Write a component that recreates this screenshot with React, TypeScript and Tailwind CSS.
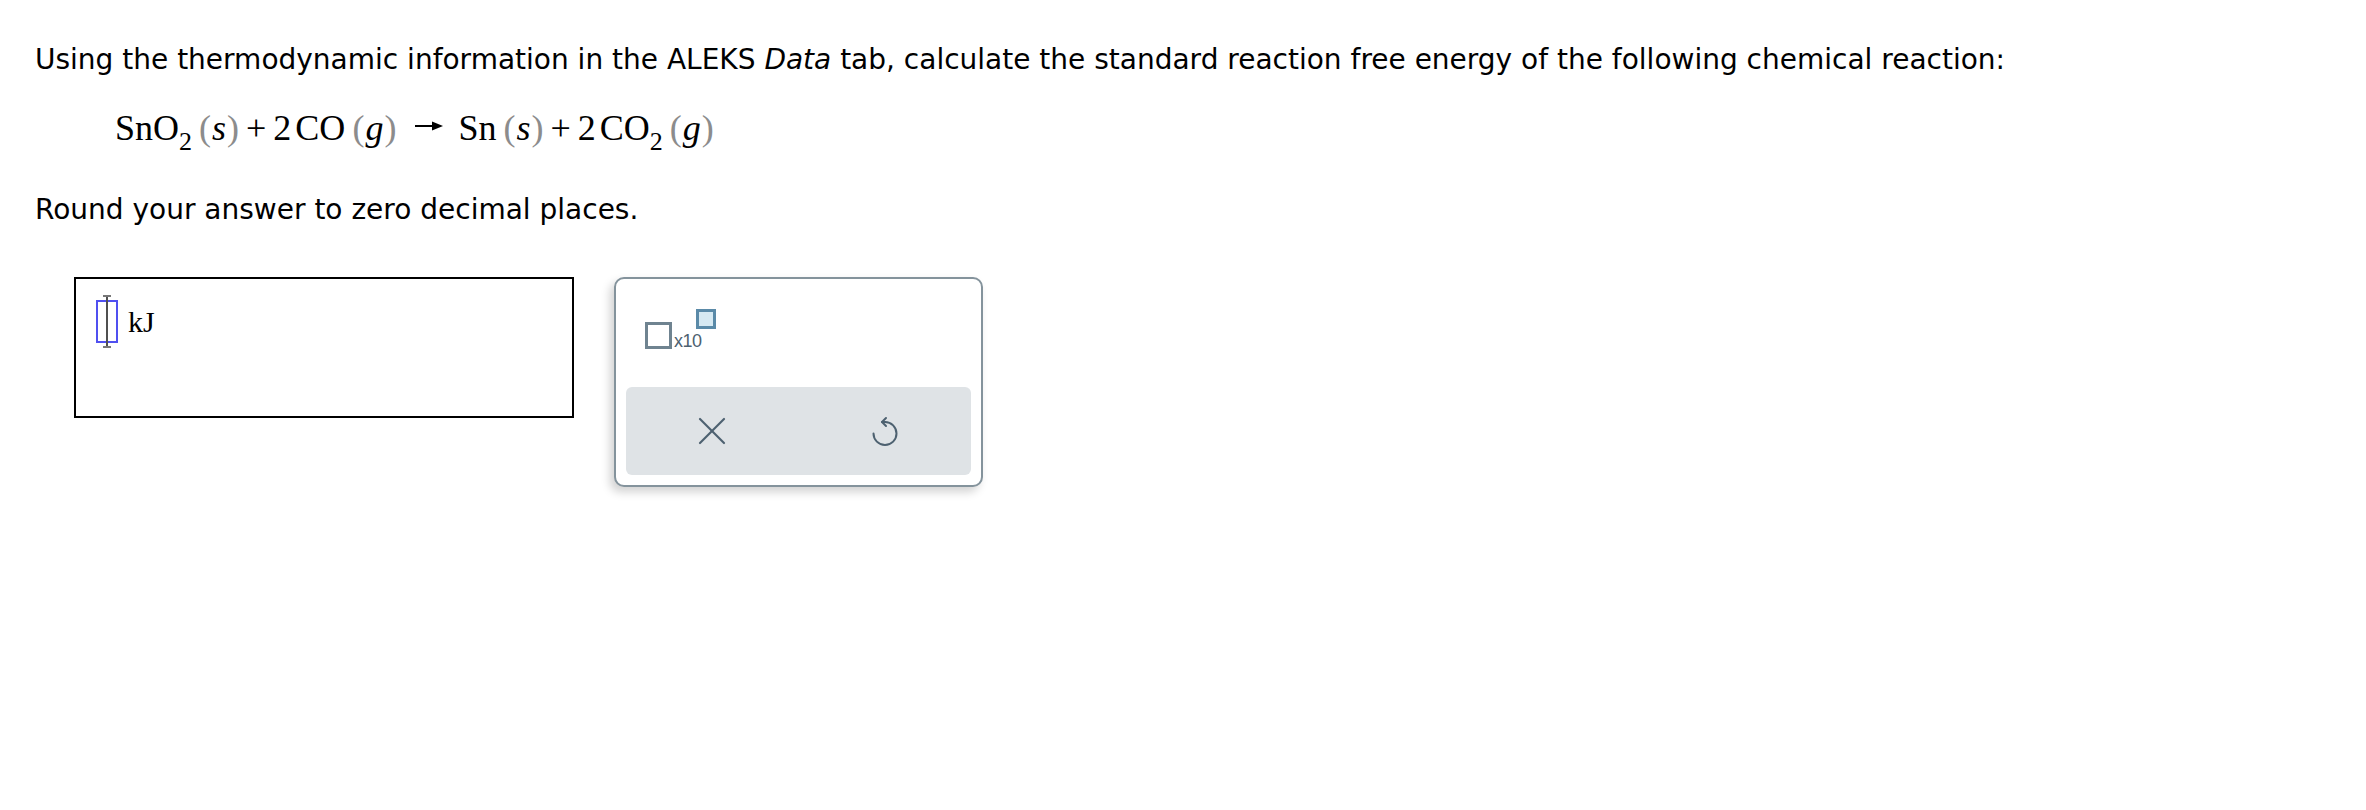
import React from "react";

function Paren({ children }: { children: React.ReactNode }) {
  return <span className="text-[#8c8c8c]">{children}</span>;
}

function Phase({ s }: { s: string }) {
  return (
    <span className="ml-[7px]">
      <Paren>(</Paren>
      <i className="px-[1px]">{s}</i>
      <Paren>)</Paren>
    </span>
  );
}

function Sub({ n }: { n: string }) {
  return <span className="relative top-[10px] text-[26px] leading-none">{n}</span>;
}

function Plus() {
  return <span className="mx-[7px]">+</span>;
}

function Arrow() {
  return (
    <svg width="30" height="12" viewBox="0 0 30 12" className="inline-block ml-[18px] mr-[14px] align-[8px]">
      <line x1="1" y1="6" x2="22" y2="6" stroke="#000" strokeWidth="2" />
      <path d="M18 1.5 L29 6 L18 10.5 Z" fill="#000" />
    </svg>
  );
}

function UndoIcon() {
  return (
    <svg width="32" height="32" viewBox="0 0 32 32" fill="none" stroke="#4d6170" strokeWidth="2" strokeLinecap="round" strokeLinejoin="round">
      <path d="M16 7 A11.5 11.5 0 1 1 4.5 18.5" />
      <path d="M16 7 H13" />
      <path d="M17 3 L13 7 L17 11" />
    </svg>
  );
}

function XIcon() {
  return (
    <svg width="28" height="28" viewBox="0 0 28 28" fill="none" stroke="#4d6170" strokeWidth="2.2" strokeLinecap="round">
      <path d="M2 2 L26 26" />
      <path d="M26 2 L2 26" />
    </svg>
  );
}

export default function App() {
  return (
    <div className="min-h-[810px] bg-white pl-[35px] pt-[44px] font-['DejaVu_Sans',sans-serif] text-black">
      <p className="text-[28px] leading-[32px] whitespace-nowrap">
        Using the thermodynamic information in the ALEKS <i>Data</i> tab, calculate the standard reaction free energy of the following chemical reaction:
      </p>

      <div className="mt-[32px] pl-[80px] font-['Liberation_Serif',serif] text-[36px] leading-[40px] whitespace-nowrap">
        <span>SnO</span>
        <Sub n="2" />
        <Phase s="s" />
        <Plus />
        <span>2</span>
        <span className="ml-[4px]">CO</span>
        <Phase s="g" />
        <Arrow />
        <span>Sn</span>
        <Phase s="s" />
        <Plus />
        <span>2</span>
        <span className="ml-[4px]">CO</span>
        <Sub n="2" />
        <Phase s="g" />
      </div>

      <p className="mt-[46px] text-[28px] leading-[32px]">Round your answer to zero decimal places.</p>

      <div className="mt-[51px] ml-[39px] flex items-start gap-[40px]">
        <div className="w-[500px] h-[141px] border-2 border-black pl-[20px] pt-[21px]">
          <div className="flex items-center gap-[10px]">
            <div className="relative w-[22px] h-[43px] border-2 border-[#5050f0]">
              <div className="absolute left-1/2 -translate-x-1/2 top-[-6px] bottom-[-6px] w-[2px] bg-[#505050]" />
              <div className="absolute left-1/2 -translate-x-1/2 top-[-7px] w-[8px] h-[2px] bg-[#777]" />
              <div className="absolute left-1/2 -translate-x-1/2 bottom-[-7px] w-[8px] h-[2px] bg-[#777]" />
            </div>
            <span className="font-['Liberation_Serif',serif] text-[30px] leading-none">kJ</span>
          </div>
        </div>

        <div className="w-[369px] h-[210px] rounded-[10px] border-2 border-[#84939c] bg-white shadow-[-4px_5px_10px_rgba(0,0,0,0.18)] p-[10px] flex flex-col">
          <div className="flex-1 pl-[19px] pt-[33px]">
            <div className="relative flex items-end">
              <div className="w-[27px] h-[27px] border-[3px] border-[#6f8390]" />
              <span className="ml-[2px] mb-[-2px] text-[18px] leading-[20px] text-[#4d6170] font-['Liberation_Sans',sans-serif] tracking-[-0.5px]">x10</span>
              <div className="relative top-[-20px] ml-[-6px] w-[20px] h-[20px] border-[3px] border-[#5a8aa8] bg-[#d6e9f2]" />
            </div>
          </div>
          <div className="h-[88px] rounded-[6px] bg-[#dfe3e6] flex">
            <div className="flex-1 flex items-center justify-center">
              <XIcon />
            </div>
            <div className="flex-1 flex items-center justify-center">
              <UndoIcon />
            </div>
          </div>
        </div>
      </div>
    </div>
  );
}
